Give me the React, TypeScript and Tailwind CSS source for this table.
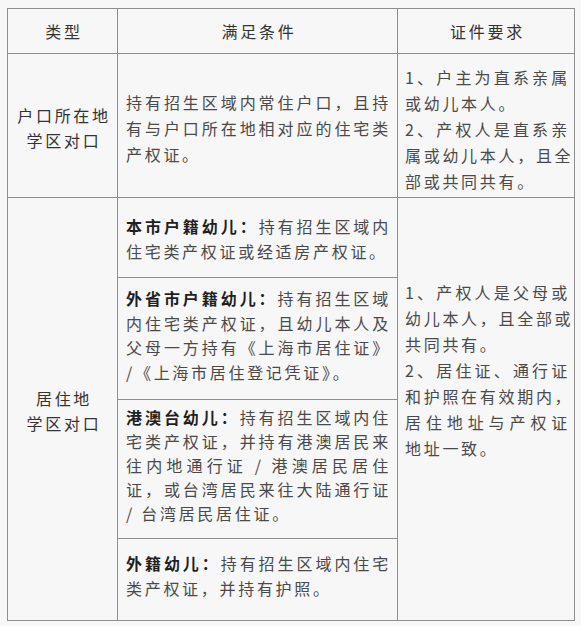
import React from "react";

function L({ children, j = true }: { children: React.ReactNode; j?: boolean }) {
  return (
    <div className={j ? "whitespace-nowrap text-justify [text-align-last:justify]" : "whitespace-nowrap"}>
      {children}
    </div>
  );
}

function B({ children }: { children: React.ReactNode }) {
  return <span className="font-bold text-[#1f1f1f]">{children}</span>;
}

export default function App() {
  return (
    <div className="min-h-screen bg-[#f7f7f7] pl-[7px] pt-[8px] font-['Noto_Sans_CJK_SC',sans-serif] text-[16px] tracking-[2.7px] text-[#4a4a4a]">
      <table className="table-fixed border-collapse w-[567px]">
        <colgroup>
          <col className="w-[110px]" />
          <col className="w-[280px]" />
          <col className="w-[177px]" />
        </colgroup>
        <tbody>
          <tr>
            <td className="h-[45px] border border-[#8e8e8e] p-0 text-center align-middle leading-[25px] pl-[3px] text-[#333]">类型</td>
            <td className="h-[45px] border border-[#8e8e8e] p-0 text-center align-middle leading-[25px] pl-[3px] text-[#333]">满足条件</td>
            <td className="h-[45px] border border-[#8e8e8e] p-0 text-center align-middle leading-[25px] pl-[3px] text-[#333]">证件要求</td>
          </tr>
          <tr>
            <td className="h-[144px] border border-[#8e8e8e] p-0 pt-[4px] text-center align-middle leading-[25px] pl-[3px] text-[#333]">
              <div>户口所在地</div>
              <div>学区对口</div>
            </td>
            <td className="h-[144px] border border-[#8e8e8e] p-0 pl-[8px] pr-[6px] pt-[35px] align-top leading-[26px]">
              <L>持有招生区域内常住户口，且持</L>
              <L>有与户口所在地相对应的住宅类</L>
              <L j={false}>产权证。</L>
            </td>
            <td className="h-[144px] border border-[#8e8e8e] p-0 pl-[7px] pr-[4px] pt-[10px] align-top leading-[26px]">
              <L>1、户主为直系亲属</L>
              <L j={false}>或幼儿本人。</L>
              <L>2、产权人是直系亲</L>
              <L>属或幼儿本人，且全</L>
              <L j={false}>部或共同共有。</L>
            </td>
          </tr>
          <tr>
            <td rowSpan={4} className="border border-[#8e8e8e] p-0 pt-[3px] text-center align-middle leading-[25px] pl-[3px] text-[#333]">
              <div>居住地</div>
              <div>学区对口</div>
            </td>
            <td className="h-[80px] border border-[#8e8e8e] p-0 pl-[8px] pr-[6px] pt-[16px] align-top leading-[25px]">
              <L>
                <B>本市户籍幼儿：</B>持有招生区域内
              </L>
              <L j={false}>住宅类产权证或经适房产权证。</L>
            </td>
            <td rowSpan={4} className="border border-[#8e8e8e] p-0 pl-[7px] pr-[4px] pt-[81px] align-top leading-[26px]">
              <L>1、产权人是父母或</L>
              <L>幼儿本人，且全部或</L>
              <L j={false}>共同共有。</L>
              <L>2、居住证、通行证</L>
              <L>和护照在有效期内，</L>
              <L>居住地址与产权证</L>
              <L j={false}>地址一致。</L>
            </td>
          </tr>
          <tr>
            <td className="h-[122px] border border-[#8e8e8e] p-0 pl-[8px] pr-[6px] pt-[8px] align-top leading-[24.7px]">
              <L>
                <B>外省市户籍幼儿：</B>持有招生区域
              </L>
              <L>内住宅类产权证，且幼儿本人及</L>
              <L>父母一方持有《上海市居住证》</L>
              <L j={false}>/《上海市居住登记凭证》。</L>
            </td>
          </tr>
          <tr>
            <td className="h-[139px] border border-[#8e8e8e] p-0 pl-[8px] pr-[6px] pt-[5px] align-top leading-[24px]">
              <L>
                <B>港澳台幼儿：</B>持有招生区域内住
              </L>
              <L>宅类产权证，并持有港澳居民来</L>
              <L>往内地通行证 / 港澳居民居住</L>
              <L>证，或台湾居民来往大陆通行证</L>
              <L j={false}>/ 台湾居民居住证。</L>
            </td>
          </tr>
          <tr>
            <td className="h-[82px] border border-[#8e8e8e] p-0 pl-[8px] pr-[6px] pt-[12px] align-top leading-[25px]">
              <L>
                <B>外籍幼儿：</B>持有招生区域内住宅
              </L>
              <L j={false}>类产权证，并持有护照。</L>
            </td>
          </tr>
        </tbody>
      </table>
    </div>
  );
}
